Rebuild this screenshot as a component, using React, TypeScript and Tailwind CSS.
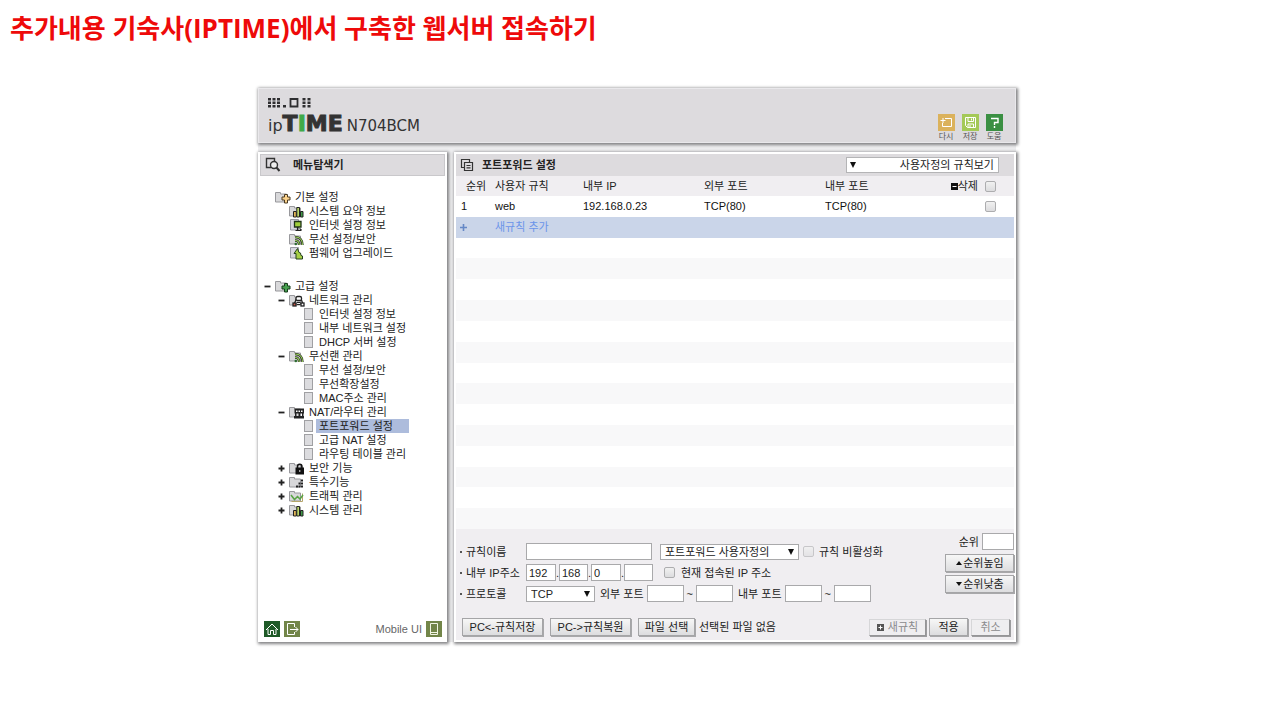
import type { ReactNode } from "react";

type Glyph =
  | "plusGold"
  | "plusGreen"
  | "bars"
  | "monitor"
  | "wifi"
  | "upload"
  | "network"
  | "router"
  | "lock"
  | "dots"
  | "traffic";

type Item = {
  level: 1 | 2 | 3;
  text: string;
  mark?: "open" | "closed";
  glyph?: Glyph;
  selected?: boolean;
};

const basicItems: Item[] = [
  { level: 1, text: "기본 설정", glyph: "plusGold" },
  { level: 2, text: "시스템 요약 정보", glyph: "bars" },
  { level: 2, text: "인터넷 설정 정보", glyph: "monitor" },
  { level: 2, text: "무선 설정/보안", glyph: "wifi" },
  { level: 2, text: "펌웨어 업그레이드", glyph: "upload" },
];

const advancedItems: Item[] = [
  { level: 1, text: "고급 설정", mark: "open", glyph: "plusGreen" },
  { level: 2, text: "네트워크 관리", mark: "open", glyph: "network" },
  { level: 3, text: "인터넷 설정 정보" },
  { level: 3, text: "내부 네트워크 설정" },
  { level: 3, text: "DHCP 서버 설정" },
  { level: 2, text: "무선랜 관리", mark: "open", glyph: "wifi" },
  { level: 3, text: "무선 설정/보안" },
  { level: 3, text: "무선확장설정" },
  { level: 3, text: "MAC주소 관리" },
  { level: 2, text: "NAT/라우터 관리", mark: "open", glyph: "router" },
  { level: 3, text: "포트포워드 설정", selected: true },
  { level: 3, text: "고급 NAT 설정" },
  { level: 3, text: "라우팅 테이블 관리" },
  { level: 2, text: "보안 기능", mark: "closed", glyph: "lock" },
  { level: 2, text: "특수기능", mark: "closed", glyph: "dots" },
  { level: 2, text: "트래픽 관리", mark: "closed", glyph: "traffic" },
  { level: 2, text: "시스템 관리", mark: "closed", glyph: "bars" },
];

const glyphs: Record<Glyph, ReactNode> = {
  plusGold: <path d="M9.500 4.500h3v2.500h2.500v3h-2.500v3h-3v-3H7V7h2.500z" fill="#fbd38c" stroke="#4a3a22" />,
  plusGreen: <path d="M9.500 4.500h3v2.500h2.500v3h-2.500v3h-3v-3H7V7h2.500z" fill="#47a04f" stroke="#173d1c" />,
  bars: (
    <g stroke="#222">
      <path d="M4.500 7.500h2.800v5.500H4.500z" fill="#e0b458" />
      <path d="M7.800 3.500h2.700V13H7.800z" fill="#b9d668" />
      <path d="M11.500 7.500h2.500V13h-2.500z" fill="#3f9a48" />
    </g>
  ),
  monitor: (
    <g>
      <path d="M5.500 3.500h6.500v5.500H5.500z" fill="#9fce3c" stroke="#1f3318" strokeWidth="1.300" />
      <path d="M8.500 9v3M6.500 12.500h6M10.500 10.500l2 1.500" stroke="#222" fill="none" strokeWidth="1.200" />
    </g>
  ),
  wifi: (
    <g fill="none">
      <path d="M6 5c4.700 0 7.500 3 7.500 8M6 8.500c2.800 0 4.200 1.700 4.200 4.500" stroke="#262b20" strokeWidth="2.400" />
      <path d="M6 5c4.700 0 7.500 3 7.500 8M6 8.500c2.800 0 4.200 1.700 4.200 4.500" stroke="#9ad35c" strokeWidth="1.100" />
      <circle cx="6.800" cy="12" r="1.300" fill="#2c6b30" />
    </g>
  ),
  upload: (
    <path d="M8.500 2.500L5 7.500h2V13h6.500v-3L12 9.500 11.500 7 10 6.500z" fill="#a6cf46" stroke="#24401f" />
  ),
  network: (
    <g stroke="#222" fill="#fff" strokeWidth="1.300">
      <path d="M7.500 5.500L5 11.500M12 5.500l2 6" fill="none" />
      <rect x="7" y="3.500" width="5.500" height="4" rx="1.500" />
      <rect x="4" y="10" width="3" height="3" fill="#c85a4a" />
      <rect x="8.300" y="9.500" width="2.600" height="2" fill="#eee" strokeWidth="1" />
      <rect x="12" y="10" width="3" height="3" />
    </g>
  ),
  router: (
    <g fill="#222">
      <path d="M5.500 3.500h9.500v5H5.500zM5 11h10v2.500H5zM6 8h1.500v4H6zM9.500 8H11v4H9.500zM13 8h1.500v4H13z" />
      <path d="M7 5.500h1.500V7H7zM9.500 5.500H11V7H9.500zM12 5.500h1.500V7H12z" fill="#fff" />
    </g>
  ),
  lock: (
    <g>
      <path d="M8.500 7V5.500a2.200 2.200 0 0 1 4.400 0V7" fill="none" stroke="#111" strokeWidth="1.600" />
      <path d="M6.500 6.500h8.500v7H6.500z" fill="#111" />
      <path d="M10.300 9h1v2h-1z" fill="#ddd" />
    </g>
  ),
  dots: (
    <path
      d="M12 4.500h2v2h-2zM9.500 7.500h2v2h-2zM12 7.500h2v2h-2zM7 10.500h2v2H7zM9.500 10.500h2v2h-2zM12 10.500h2v2h-2z"
      fill="#222"
    />
  ),
  traffic: (
    <g fill="none">
      <path d="M2.500 12.500h11v-8" stroke="#b5a56a" />
      <path d="M2 6l3.500 4.500 3-3 2.500 2.500L14 6" stroke="#58a345" strokeWidth="1.500" />
    </g>
  ),
};

function TreeIcon({ glyph, level }: { glyph?: Glyph; level: number }) {
  if (level === 3) {
    return (
      <svg className="h-3.5 w-3.5 shrink-0" viewBox="0 0 14 14" aria-hidden="true">
        <rect x="1.500" y="1.500" width="8" height="11" fill="#dcdcdf" stroke="#a0a0a3" />
      </svg>
    );
  }
  const page = level === 2 && (glyph === "monitor" || glyph === "upload");
  return (
    <svg className="h-3.5 w-4 shrink-0" viewBox="0 0 16 14" aria-hidden="true">
      {page ? (
        <path d="M1.500 1.500h8v10.500h-8z" fill="#d6d6de" stroke="#9898a2" />
      ) : (
        <path d="M.5 2.500h5v1.500h6v8H.500z" fill="#d8d8da" stroke="#98989c" />
      )}
      {glyph && glyphs[glyph]}
    </svg>
  );
}

const indents = { 1: "pl-0", 2: "pl-3.5", 3: "pl-7" };

function Tree({ items, label }: { items: Item[]; label: string }) {
  return (
    <ul aria-label={label}>
      {items.map((item, index) => (
        <li key={index} className={`flex h-3.5 items-center ${indents[item.level]}`}>
          <span className="flex w-[15px] shrink-0 items-center pl-1">
            {item.mark && (
              <svg className="h-[7px] w-[7px]" viewBox="0 0 7 7" aria-hidden="true">
                <path d={item.mark === "open" ? "M.5 3.500h6" : "M.500 3.500h6M3.500 .5v6"} stroke="#222" strokeWidth="1.800" />
              </svg>
            )}
          </span>
          <TreeIcon glyph={item.glyph} level={item.level} />
          <a
            href="#"
            className={
              item.level === 3
                ? `-ml-px flex h-3.5 items-center whitespace-nowrap px-[3px] ${item.selected ? "min-w-[93px] bg-[#adbcdc]" : ""}`
                : "pl-1 whitespace-nowrap"
            }
          >
            {item.text}
          </a>
        </li>
      ))}
    </ul>
  );
}

function Arrow({ side }: { side: "left" | "right" }) {
  return (
    <svg
      className={`pointer-events-none absolute top-1 h-2 w-2 ${side === "left" ? "left-[3px]" : "right-1"}`}
      viewBox="0 0 8 8"
      aria-hidden="true"
    >
      <path d="M1 1h6L4 7z" fill="#111" />
    </svg>
  );
}

const field = "h-[17px] border border-[#a9a9ab] bg-white px-0.5 outline-none";
const raised =
  "flex h-[18px] items-center justify-center whitespace-nowrap border border-[#a5a5a7] bg-linear-to-b from-[#f7f7f7] to-[#dddddf] shadow-[1px_1px_0_#a8a8aa]";
const dimmed =
  "flex h-[17px] items-center justify-center whitespace-nowrap border border-[#d6d6d8] border-r-[#959597] border-b-[#959597] bg-[#efeef0] text-[#8a8a8c] shadow-[1px_1px_0_#9c9c9e]";
const tick =
  "h-[11px] w-[11px] shrink-0 appearance-none rounded-[2px] border border-[#adadaf] bg-linear-to-b from-[#f1f1f1] to-[#dcdcde]";
const panel = "border-2 border-white shadow-[1px_1px_3px_1px_#808083]";

function Tool({ label, color, children }: { label: string; color: string; children: ReactNode }) {
  return (
    <button type="button" className="flex w-6 flex-col items-center gap-0.5">
      <svg className={`h-[17px] w-[17px] ${color}`} viewBox="0 0 17 17" fill="none" stroke="#fff" aria-hidden="true">
        {children}
      </svg>
      <span className="text-[8px] leading-[8px] whitespace-nowrap text-[#555]">{label}</span>
    </button>
  );
}

function FieldLabel({ id, children }: { id: string; children: ReactNode }) {
  return (
    <label htmlFor={id} className="flex w-[66px] shrink-0 items-center gap-1 whitespace-nowrap">
      <span className="h-0.5 w-0.5 bg-[#555]" />
      {children}
    </label>
  );
}

function PortRange({ id, label }: { id: string; label: string }) {
  return (
    <div className="flex items-center gap-[3px]">
      <label htmlFor={id} className="whitespace-nowrap">
        {label}
      </label>
      <input id={id} className={`w-[37px] ${field}`} />
      <span>~</span>
      <input aria-label={`${label} 끝`} className={`w-[37px] ${field}`} />
    </div>
  );
}

export default function App() {
  return (
    <div className="min-h-screen bg-white font-['Liberation_Sans','Noto_Sans_CJK_KR',sans-serif] text-[11px] leading-[14px] text-[#222]">
      <h1 className="px-2.5 pt-2.5 font-['Open_Sans','Noto_Sans_CJK_KR',sans-serif] text-[26px] leading-9 font-bold text-[#ee0a0a]">
        추가내용 기숙사(IPTIME)에서 구축한 웹서버 접속하기
      </h1>

      <div className="pt-[42px] pr-[6px]">
        <div className="mx-auto flex w-full max-w-[758px] flex-col gap-[9px] bg-[#eeeef0]">
          <header className="flex h-[55px] items-end justify-between border border-[#e9e8eb] bg-[#dddbde] pr-[9px] pl-[9px] shadow-[1px_1px_3px_1px_#808083]">
            <div className="self-start pt-[9px]">
              <svg className="block h-2.5 w-11" viewBox="0 0 44 10" fill="#2e2e30" aria-hidden="true">
                <path d="M0 0h3v2.500H0zM4.500 0h3v2.500h-3zM9 0h3v2.500H9zM0 3.500h3V6H0zM4.500 3.500h3V6h-3zM9 3.500h3V6H9zM0 7h3v2.500H0zM4.500 7h3v2.500h-3zM9 7h3v2.500H9zM15 7h3v2.500h-3z" />
                <path d="M22.500 1h7v7.500h-7z" fill="none" stroke="#2e2e30" strokeWidth="1.800" />
                <path d="M34.500 0h3v2.500h-3zM39.500 0h3v2.500h-3zM34.500 3.500h3V6h-3zM39.500 3.500h3V6h-3zM34.500 7h3v2.500h-3zM39.500 7h3v2.500h-3z" />
              </svg>
              <div className="flex items-baseline pt-1 font-['DejaVu_Sans',sans-serif] leading-6 text-[#333]">
                <span className="text-[16px]">ip</span>
                <span className="text-[22px] font-bold [-webkit-text-stroke:1px]">
                  T<span className="text-[#3fa948]">I</span>ME
                </span>
                <span className="pl-1 text-[15px]">N704BCM</span>
              </div>
            </div>
            <div className="flex items-end pb-px">
              <Tool label="다시" color="bg-[#dbb25c]">
                <path d="M7 4.500h6.500v8H4.500V9M2.500 6.500h5M5 4v5" />
              </Tool>
              <Tool label="저장" color="bg-[#a4c957]">
                <path d="M3.500 3.500h10v10h-8l-2-2zM6 3.500v4h5.500v-4M6 13.500V10h5.500v3.500M9.500 4.500v2M8 11v2" />
              </Tool>
              <Tool label="도움" color="bg-[#3a8f42]">
                <path d="M5 4.500h7v4H8.500V11M8.500 12v2" strokeWidth="1.400" />
              </Tool>
            </div>
          </header>

          <div className="flex gap-[7px]">
            <aside className={`flex w-[189px] shrink-0 flex-col bg-white ${panel}`}>
              <h2 className="flex h-[22px] items-center gap-3 border border-[#c9c8cb] bg-[#dddbde] px-1 font-bold">
                <svg className="h-4 w-4" viewBox="0 0 16 16" fill="none" stroke="#333" strokeWidth="1.400" aria-hidden="true">
                  <path d="M6 10.500H1.500v-9h8V4" />
                  <circle cx="9" cy="8" r="3.500" fill="#eee" />
                  <path d="M11.500 10.500l3 3.500" strokeWidth="2" />
                </svg>
                메뉴탐색기
              </h2>
              <nav className="flex flex-1 flex-col gap-[19px] pt-[14px]">
                <Tree items={basicItems} label="기본 설정" />
                <Tree items={advancedItems} label="고급 설정" />
              </nav>
              <div className="flex items-center gap-1 pr-[3px] pb-[3px] pl-1">
                <a href="#" aria-label="홈" className="bg-[#1f5a28]">
                  <svg className="h-4 w-4" viewBox="0 0 16 16" fill="none" stroke="#fff" aria-hidden="true">
                    <path d="M2 9l6-6 6 6M4 8v5.500h2.500V9.500h3v4H12V8" />
                  </svg>
                </a>
                <a href="#" aria-label="로그아웃" className="bg-[#728549]">
                  <svg className="h-4 w-4" viewBox="0 0 16 16" fill="none" stroke="#fff" aria-hidden="true">
                    <path d="M10.500 6V2.500h-7v11h7V11M6 8.500h8M11.500 6l2.500 2.500-2.500 2.500" />
                  </svg>
                </a>
                <a href="#" className="ml-auto flex items-center gap-1 text-[#666]">
                  Mobile UI
                  <svg className="h-4 w-4 bg-[#728549]" viewBox="0 0 16 16" fill="none" stroke="#f2f5e4" aria-hidden="true">
                    <path d="M4.500 2.500h7v11h-7zM4.500 11.500h7" />
                  </svg>
                </a>
              </div>
            </aside>

            <main className={`flex min-w-0 flex-1 flex-col bg-[#f0eef1] ${panel}`}>
              <div className="flex h-[22px] items-center justify-between bg-[#dddbde] pr-[15px] pl-1">
                <h2 className="flex items-center gap-2 font-bold">
                  <svg className="h-3.5 w-3.5" viewBox="0 0 14 14" fill="none" stroke="#333" strokeWidth="1.200" aria-hidden="true">
                    <path d="M4 9.500H1.500v-8h8V4" />
                    <path d="M4.500 4.500h8v8h-8zM6.500 7.500h4M6.500 9.800h4" />
                  </svg>
                  포트포워드 설정
                </h2>
                <div className="relative">
                  <select
                    aria-label="규칙 보기"
                    dir="rtl"
                    className="block h-4 w-[153px] appearance-none border border-[#b4b4b6] bg-white pr-1 pl-4 outline-none"
                  >
                    <option>사용자정의 규칙보기</option>
                  </select>
                  <Arrow side="left" />
                </div>
              </div>

              <table className="h-[353px] w-full table-fixed border-collapse text-left">
                <colgroup>
                  <col className="w-[39px]" />
                  <col className="w-[88px]" />
                  <col className="w-[121px]" />
                  <col className="w-[121px]" />
                  <col />
                  <col className="w-[80px]" />
                </colgroup>
                <thead>
                  <tr className="h-5 bg-[#f0eef1]">
                    <th className="p-0 pl-2.5 font-normal">순위</th>
                    <th className="p-0 font-normal">사용자 규칙</th>
                    <th className="p-0 font-normal">내부 IP</th>
                    <th className="p-0 font-normal">외부 포트</th>
                    <th className="p-0 font-normal">내부 포트</th>
                    <th className="p-0 pr-[18px] font-normal">
                      <label className="flex items-center justify-end">
                        <svg className="h-[7px] w-[7px]" viewBox="0 0 7 7" aria-hidden="true">
                          <path d="M0 0h7v7H0z" fill="#111" />
                          <path d="M1.500 3.500h4" stroke="#fff" />
                        </svg>
                        삭제
                        <input type="checkbox" className={`ml-[7px] ${tick}`} />
                      </label>
                    </th>
                  </tr>
                </thead>
                <tbody>
                  <tr className="h-5 bg-white text-[#111]">
                    <td className="p-0 pl-[5px]">1</td>
                    <td className="p-0">web</td>
                    <td className="p-0">192.168.0.23</td>
                    <td className="p-0">TCP(80)</td>
                    <td className="p-0">TCP(80)</td>
                    <td className="p-0 pr-[18px]">
                      <input type="checkbox" aria-label="web 삭제" className={`ml-auto block ${tick}`} />
                    </td>
                  </tr>
                  <tr className="h-5 bg-[#cad5e9] text-[#6a94ea]">
                    <td className="p-0 pl-1">
                      <svg className="h-[7px] w-[7px]" viewBox="0 0 7 7" aria-hidden="true">
                        <path d="M0 3.500h7M3.500 0v7" stroke="#6588c6" strokeWidth="1.600" />
                      </svg>
                    </td>
                    <td className="p-0" colSpan={5}>
                      새규칙 추가
                    </td>
                  </tr>
                  {Array.from({ length: 14 }, (_, index) => (
                    <tr key={index} className="h-5 odd:bg-white even:bg-[#f8f8f9]">
                      <td className="p-0" colSpan={6} />
                    </tr>
                  ))}
                </tbody>
              </table>

              <form className="flex flex-col gap-4 pt-1 pb-1" onSubmit={(event) => event.preventDefault()}>
                <div className="flex justify-between gap-2 pl-1">
                  <div className="flex flex-col gap-1 pt-2.5">
                    <div className="flex h-[17px] items-center">
                      <FieldLabel id="rule-name">규칙이름</FieldLabel>
                      <input id="rule-name" className={`w-[126px] ${field}`} />
                      <div className="relative ml-2">
                        <select
                          aria-label="규칙 종류"
                          className="block h-4 w-[139px] appearance-none border border-[#a9a9ab] bg-white pr-4 pl-1 outline-none"
                        >
                          <option>포트포워드 사용자정의</option>
                        </select>
                        <Arrow side="right" />
                      </div>
                      <label className="ml-1 flex items-center gap-[5px] whitespace-nowrap">
                        <input type="checkbox" disabled className={`opacity-60 ${tick}`} />
                        규칙 비활성화
                      </label>
                    </div>
                    <div className="flex h-[17px] items-center">
                      <FieldLabel id="ip-1">내부 IP주소</FieldLabel>
                      <input id="ip-1" defaultValue="192" className={`w-[30px] ${field}`} />
                      <span className="w-[3px]">.</span>
                      <input aria-label="IP 2" defaultValue="168" className={`w-[29px] ${field}`} />
                      <span className="w-[3px]">.</span>
                      <input aria-label="IP 3" defaultValue="0" className={`w-[30px] ${field}`} />
                      <span className="w-[3px]">.</span>
                      <input aria-label="IP 4" className={`w-[29px] ${field}`} />
                      <label className="ml-[11px] flex items-center gap-[6px] whitespace-nowrap">
                        <input type="checkbox" className={tick} />
                        현재 접속된 IP 주소
                      </label>
                    </div>
                    <div className="flex h-[17px] items-center">
                      <FieldLabel id="protocol">프로토콜</FieldLabel>
                      <div className="relative mr-[5px]">
                        <select
                          id="protocol"
                          className="block h-4 w-[69px] appearance-none border border-[#a9a9ab] bg-white pr-4 pl-1 outline-none"
                        >
                          <option>TCP</option>
                        </select>
                        <Arrow side="right" />
                      </div>
                      <div className="flex items-center gap-[5px]">
                        <PortRange id="outer-port" label="외부 포트" />
                        <PortRange id="inner-port" label="내부 포트" />
                      </div>
                    </div>
                  </div>
                  <div className="flex w-[69px] shrink-0 flex-col gap-[3px]">
                    <label className="flex items-center justify-end gap-[3px] whitespace-nowrap">
                      순위
                      <input className={`w-8 ${field}`} />
                    </label>
                    <button type="button" className={`mt-px ${raised}`}>
                      <svg className="h-1.5 w-2" viewBox="0 0 8 6" aria-hidden="true">
                        <path d="M1 5l3-4 3 4z" fill="#111" />
                      </svg>
                      순위높임
                    </button>
                    <button type="button" className={raised}>
                      <svg className="h-1.5 w-2" viewBox="0 0 8 6" aria-hidden="true">
                        <path d="M1 1h6L4 5z" fill="#111" />
                      </svg>
                      순위낮춤
                    </button>
                  </div>
                </div>

                <div className="flex items-center justify-between pr-1 pl-[6px]">
                  <div className="flex items-center gap-[7px]">
                    <button type="button" className={`w-[81px] ${raised}`}>
                      PC&lt;-규칙저장
                    </button>
                    <button type="button" className={`w-[81px] ${raised}`}>
                      PC-&gt;규칙복원
                    </button>
                    <div className="flex items-center gap-1">
                      <label className={`w-[57px] ${raised}`}>
                        <input type="file" className="sr-only" />
                        파일 선택
                      </label>
                      <span className="whitespace-nowrap">선택된 파일 없음</span>
                    </div>
                  </div>
                  <div className="flex items-center gap-[3px]">
                    <button type="button" className={`w-[57px] gap-1 ${dimmed}`}>
                      <svg className="h-[7px] w-[7px]" viewBox="0 0 7 7" aria-hidden="true">
                        <path d="M0 0h7v7H0z" fill="#555" />
                        <path d="M1.500 3.500h4M3.500 1.500v4" stroke="#fff" />
                      </svg>
                      새규칙
                    </button>
                    <button type="submit" className={`w-[39px] ${raised}`}>
                      적용
                    </button>
                    <button type="button" className={`w-[39px] ${dimmed}`}>
                      취소
                    </button>
                  </div>
                </div>
              </form>
            </main>
          </div>
        </div>
      </div>
    </div>
  );
}
